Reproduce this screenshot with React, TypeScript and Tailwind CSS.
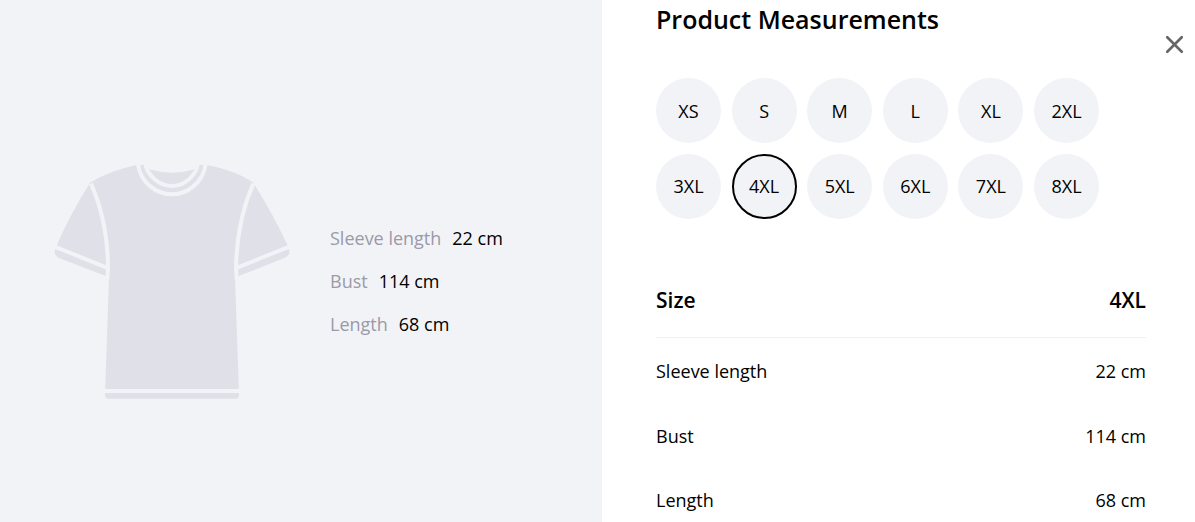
import { X } from "lucide-react";

const sizes = ["XS", "S", "M", "L", "XL", "2XL", "3XL", "4XL", "5XL", "6XL", "7XL", "8XL"];

const measurements = [
  { label: "Sleeve length", value: "22 cm" },
  { label: "Bust", value: "114 cm" },
  { label: "Length", value: "68 cm" },
];

function Shirt() {
  return (
    <svg viewBox="0 0 780 780" className="h-[260px] w-[260px] shrink-0">
      <path
        d="M290 42Q205 60 150 95Q90 190 48 288Q38 310 55 320L197 375L207 375L195 732Q195 743 205 743L588 743Q597 743 597 732L585 375L596 375L735 320Q755 310 745 288Q700 190 640 95Q590 60 500 42Z"
        fill="#dfe0e8"
      />
      <g fill="none" stroke="#f2f3f7" strokeWidth="12">
        <path d="M153 98C185 170 203 260 204 350L202 385" />
        <path d="M640 98C608 170 590 260 588 350L590 385" />
        <path d="M42 286L200 350" />
        <path d="M750 286L592 350" />
        <path d="M190 720L602 720" />
        <path d="M294 38C300 95 350 130 396 130C442 130 490 95 497 38" />
        <path d="M316 38C322 75 360 105 396 105C432 105 468 75 474 38" />
      </g>
      <path d="M312 36L480 36L470 54Q396 82 322 54Z" fill="#f2f3f7" />
      <path d="M325 55Q396 75 467 55Q440 82 396 82Q352 82 325 55Z" fill="#dfe0e8" />
    </svg>
  );
}

export default function App() {
  return (
    <div className="flex h-[522px] w-[1195px] overflow-hidden bg-white font-['Open_Sans','Noto_Sans',sans-serif] text-black">
      {/* left preview */}
      <div className="flex w-[602px] shrink-0 items-center bg-[#f2f3f7] pl-[40px] pt-[39px]">
        <Shirt />
        <div className="ml-[30px] flex flex-col gap-[19px] text-[18px] leading-[24px]">
          {measurements.map((m) => (
            <div key={m.label} className="flex gap-[11px]">
              <span className="text-[#9a9aa8]">{m.label}</span>
              <span>{m.value}</span>
            </div>
          ))}
        </div>
      </div>

      {/* right panel */}
      <div className="relative flex-1 pl-[54px] pr-[49px]">
        <h2 className="pt-[1px] text-[25px] font-semibold leading-[36px]">Product Measurements</h2>
        <button className="absolute right-[6px] top-[30px] text-[#666666]">
          <X size={29} strokeWidth={2.2} />
        </button>
        <div className="mt-[41px] grid w-[443px] grid-cols-6 gap-x-[10.6px] gap-y-[10.5px]">
          {sizes.map((s) => (
            <div
              key={s}
              className={
                s === "4XL"
                  ? "flex h-[65px] w-[65px] items-center justify-center rounded-full border-2 border-black bg-[#f2f3f7] pt-[1px] text-[18px]"
                  : "flex h-[65px] w-[65px] items-center justify-center rounded-full bg-[#f2f3f7] pt-[1px] text-[18px]"
              }
            >
              {s}
            </div>
          ))}
        </div>
        <div className="mt-[63px] flex h-[56px] items-center justify-between border-b border-[#f0f0f2] pb-[17px] text-[21px] font-semibold">
          <span>Size</span>
          <span>4XL</span>
        </div>
        <div className="mt-[2px] flex flex-col text-[18px]">
          {measurements.map((m) => (
            <div key={m.label} className="flex h-[64.5px] items-center justify-between">
              <span>{m.label}</span>
              <span>{m.value}</span>
            </div>
          ))}
        </div>
      </div>
    </div>
  );
}
